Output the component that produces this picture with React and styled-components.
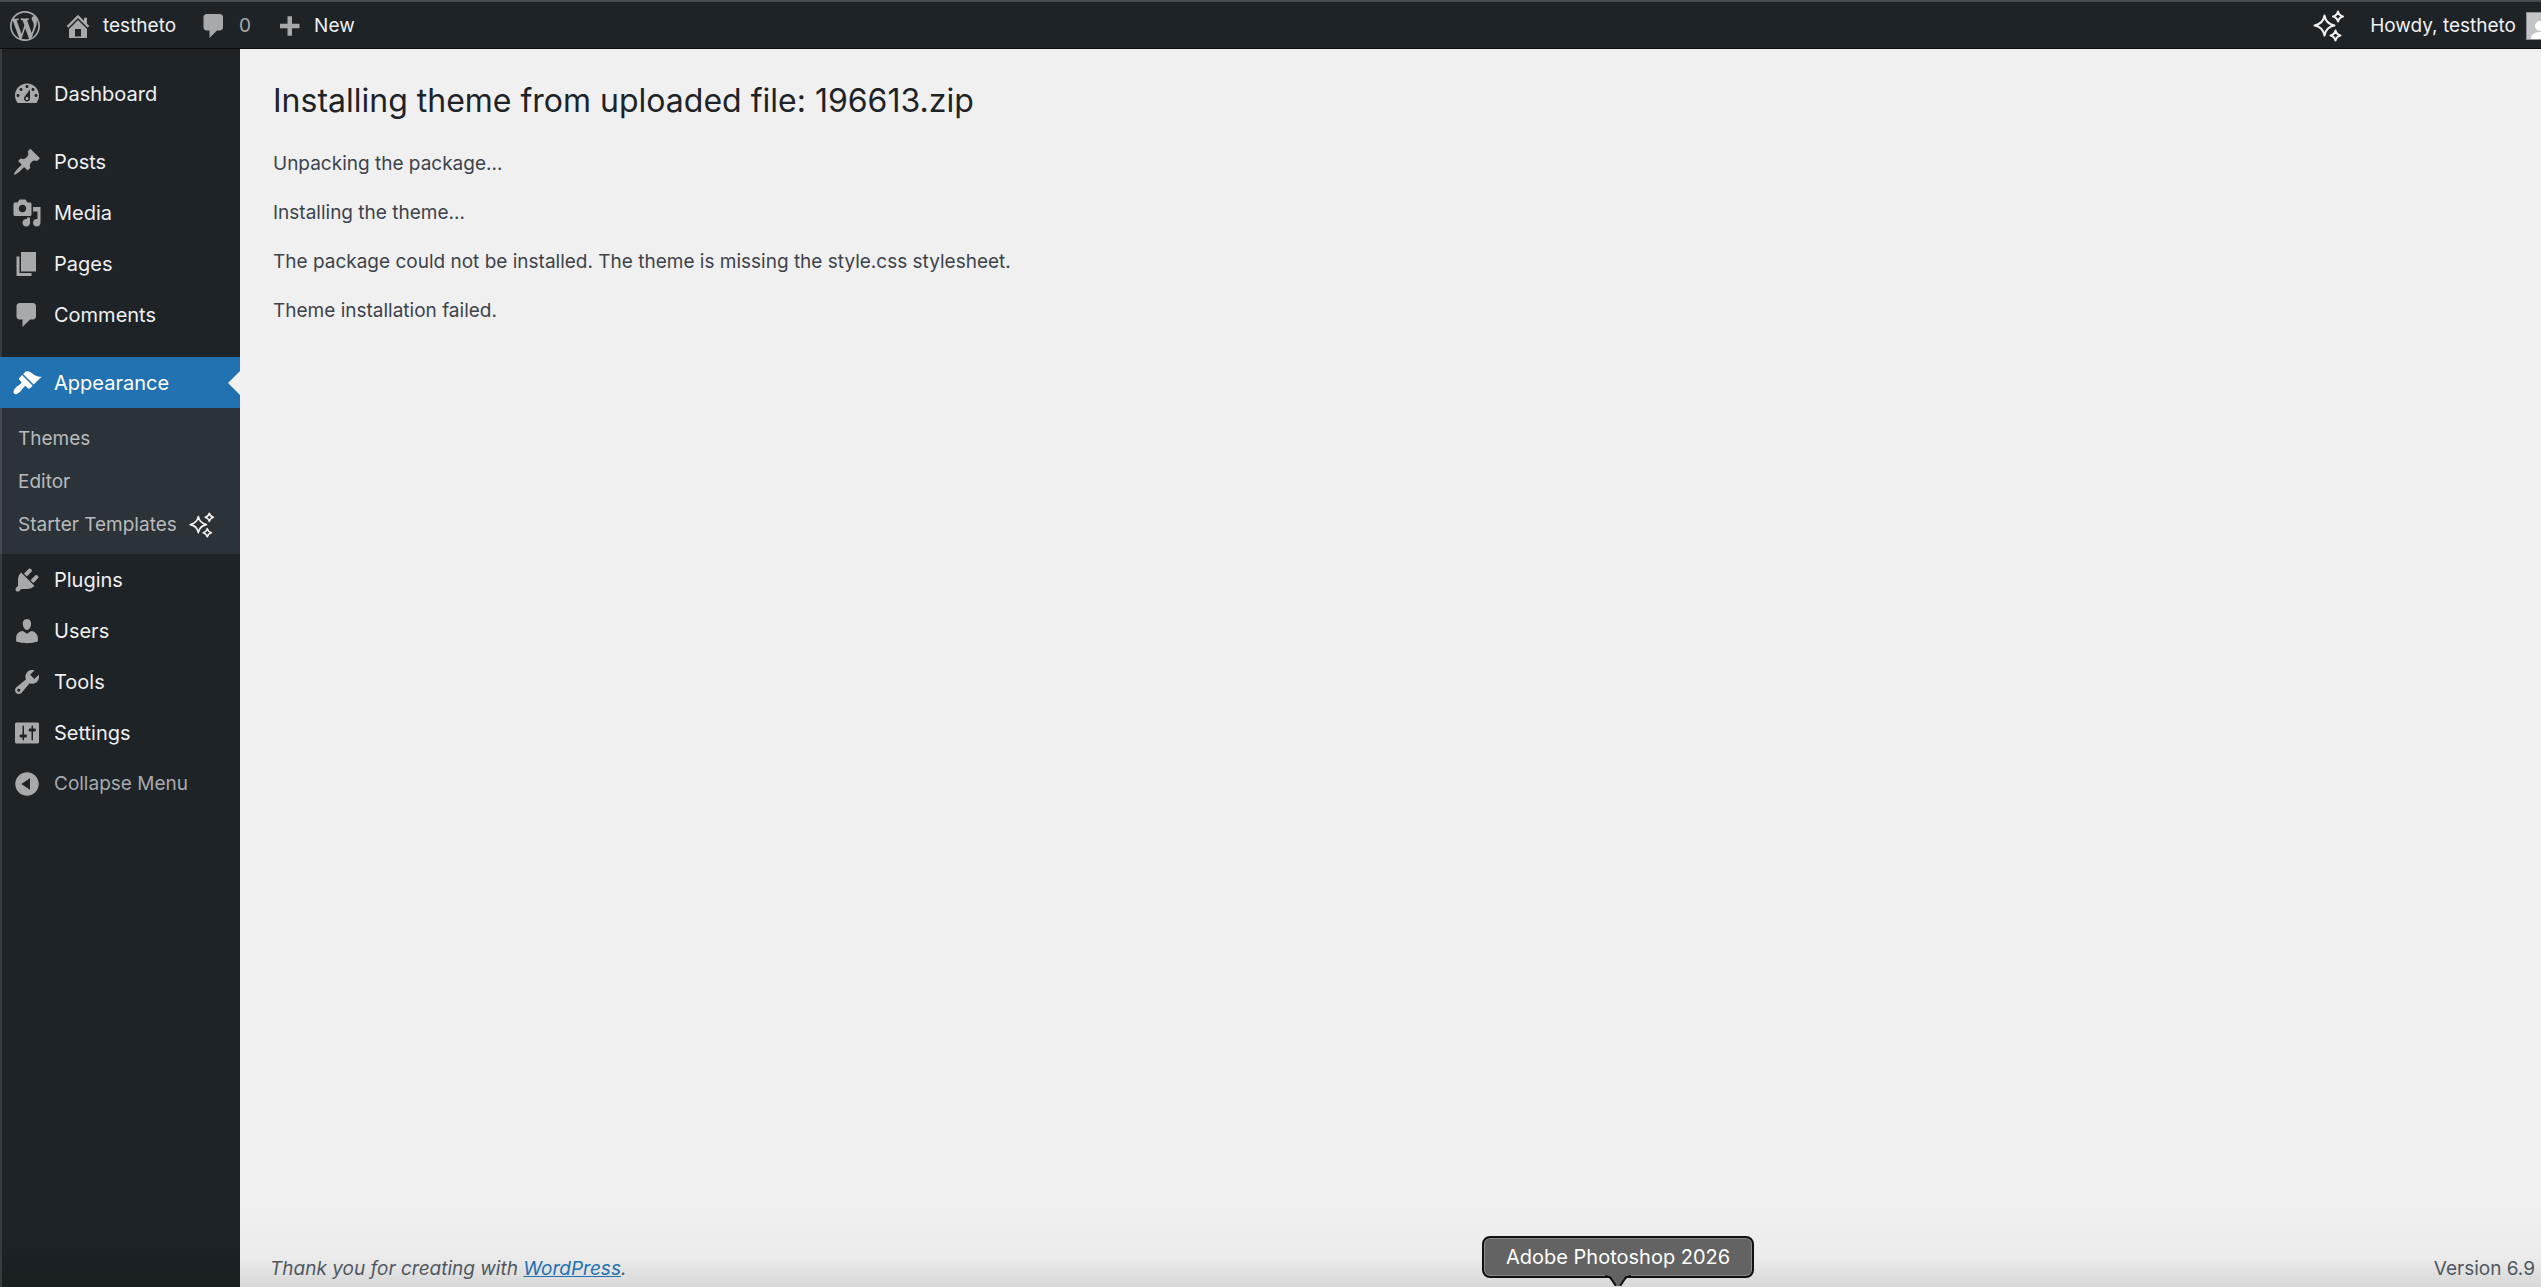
import styled, { createGlobalStyle } from "styled-components"

const icons = {
    wordpress: "M20 10c0-5.51-4.49-10-10-10C4.48 0 0 4.49 0 10c0 5.52 4.48 10 10 10 5.51 0 10-4.48 10-10zM7.78 15.37L4.37 6.22c.55-.02 1.17-.08 1.17-.08.5-.06.44-1.13-.06-1.11 0 0-1.45.11-2.37.11-.18 0-.37 0-.58-.01C4.12 2.69 6.87 1.11 10 1.11c2.33 0 4.45.87 6.05 2.34-.68-.11-1.65.39-1.65 1.58 0 .74.45 1.36.9 2.1.35.61.55 1.36.55 2.46 0 1.49-1.4 5-1.4 5l-3.03-8.37c.54-.02.82-.17.82-.17.5-.05.44-1.25-.06-1.22 0 0-1.44.12-2.38.12-.87 0-2.33-.12-2.33-.12-.5-.03-.56 1.2-.06 1.22l.92.08 1.26 3.41zM17.41 10c.24-.64.74-1.87.43-4.25.7 1.29 1.05 2.71 1.05 4.25 0 3.29-1.73 6.24-4.4 7.78.97-2.59 1.94-5.2 2.92-7.78zM6.1 18.09C3.12 16.65 1.11 13.53 1.11 10c0-1.3.23-2.48.72-3.59C3.25 10.3 4.67 14.2 6.1 18.09zm4.03-6.63l2.58 6.98c-.86.29-1.76.45-2.71.45-.79 0-1.57-.11-2.29-.33.81-2.38 1.62-4.74 2.42-7.1z",
    home: "M16 8.5l1.53 1.53-1.06 1.06L10 4.6l-6.47 6.49-1.06-1.06L10 2.5l4 4v-2h2v4zm-6-2.46l6 5.99V18H4v-5.97zM12 17v-5H8v5h4z",
    plus: "M17 8.5v3h-5v5H9v-5H4v-3h5v-5h3v5h5z",
    dashboard: "M3.76 16h12.48c1.1-1.37 1.76-3.11 1.76-5 0-4.42-3.58-8-8-8s-8 3.58-8 8c0 1.89.66 3.63 1.76 5zM10 4c.55 0 1 .45 1 1s-.45 1-1 1-1-.45-1-1 .45-1 1-1zM6 6c.55 0 1 .45 1 1s-.45 1-1 1-1-.45-1-1 .45-1 1-1zm8 0c.55 0 1 .45 1 1s-.45 1-1 1-1-.45-1-1 .45-1 1-1zm-5.37 5.55L12 7v6c0 1.1-.9 2-2 2s-2-.9-2-2c0-.57.24-1.08.63-1.45zM4 10c.55 0 1 .45 1 1s-.45 1-1 1-1-.45-1-1 .45-1 1-1zm12 0c.55 0 1 .45 1 1s-.45 1-1 1-1-.45-1-1 .45-1 1-1zm-5 3c0-.55-.45-1-1-1s-1 .45-1 1 .45 1 1 1 1-.45 1-1z",
    posts: "M10.44 3.02l1.82-1.82 6.36 6.35-1.83 1.82c-1.05-.68-2.48-.57-3.41.36l-.75.75c-.92.93-1.04 2.35-.35 3.41l-1.83 1.82-2.41-2.41-2.8 2.79c-.42.42-3.38 2.71-3.8 2.29s1.86-3.39 2.28-3.81l2.79-2.79L4.1 9.36l1.83-1.82c1.05.69 2.48.57 3.4-.36l.75-.75c.93-.92 1.05-2.35.36-3.41z",
    media: "M13 11V4c0-.55-.45-1-1-1h-1.67L9 1H5L3.67 3H2c-.55 0-1 .45-1 1v7c0 .55.45 1 1 1h10c.55 0 1-.45 1-1zM7 4.5c1.38 0 2.5 1.12 2.5 2.5S8.38 9.5 7 9.5 4.5 8.38 4.5 7 5.62 4.5 7 4.5zM14 6h5v10.5c0 1.38-1.12 2.5-2.5 2.5S14 17.88 14 16.5s1.12-2.5 2.5-2.5c.17 0 .34.02.5.05V9h-3V6zm-4 8.05V13h2v3.5c0 1.38-1.12 2.5-2.5 2.5S7 17.88 7 16.5 8.12 14 9.5 14c.17 0 .34.02.5.05z",
    pages: "M6 15V2h10v13H6zm-1 1h8v2H3V5h2v11z",
    comments: "M5 2h9c1.1 0 2 .9 2 2v7c0 1.1-.9 2-2 2h-2l-5 5v-5H5c-1.1 0-2-.9-2-2V4c0-1.1.9-2 2-2z",
    appearance: "M14.48 11.06L7.41 3.99l1.5-1.5c.5-.56 2.3-.47 3.51.32 1.21.8 1.43 1.28 2.91 2.1 1.18.64 2.45 1.26 4.45.85zm-.71.71L6.7 4.7 4.93 6.47c-.39.39-.39 1.02 0 1.41l1.06 1.06c.39.39.39 1.03 0 1.42-.6.6-1.43 1.11-2.21 1.69-.35.26-.7.53-1.01.84C1.43 14.23.4 16.08 1.4 17.07c.99 1 2.84-.03 4.18-1.36.31-.31.58-.66.85-1.02.57-.78 1.08-1.61 1.69-2.21.39-.39 1.02-.39 1.41 0l1.06 1.06c.39.39 1.02.39 1.41 0z",
    plugins: "M13.11 4.36L9.87 7.6 8 5.73l3.24-3.24c.35-.34 1.05-.2 1.56.32.52.51.66 1.21.31 1.55zm-8 1.77l.91-1.12 9.01 9.01-1.19.84c-.71.71-2.63 1.16-3.82 1.16H6.14L4.9 17.26c-.59.59-1.54.59-2.12 0-.59-.58-.59-1.53 0-2.12l1.24-1.24v-3.88c0-1.13.4-3.19 1.09-3.89zm7.26 3.97l3.24-3.24c.34-.35 1.04-.21 1.55.31.52.51.66 1.21.31 1.55l-3.24 3.25z",
    users: "M10 9.25c-2.27 0-2.73-3.44-2.73-3.44C7 4.02 7.82 2 9.97 2c2.16 0 2.98 2.02 2.71 3.81 0 0-.41 3.44-2.68 3.44zm0 2.57L12.72 10c2.39 0 4.52 2.33 4.52 4.53v2.49s-3.65 1.13-7.24 1.13c-3.65 0-7.24-1.13-7.24-1.13v-2.49c0-2.25 1.94-4.48 4.47-4.48z",
    tools: "M16.68 9.77c-1.34 1.34-3.3 1.67-4.95.99l-5.41 6.52c-.99.99-2.59.99-3.58 0s-.99-2.59 0-3.57l6.52-5.42c-.68-1.65-.35-3.61.99-4.95 1.28-1.28 3.12-1.62 4.72-1.06l-2.89 2.89 2.82 2.82 2.86-2.87c.53 1.58.18 3.39-1.08 4.65zM3.81 16.21c.4.39 1.04.39 1.43 0 .4-.4.4-1.04 0-1.43-.39-.4-1.03-.4-1.43 0-.39.39-.39 1.03 0 1.43z",
    settings: "M18 16V4c0-.55-.45-1-1-1H3c-.55 0-1 .45-1 1v12c0 .55.45 1 1 1h14c.55 0 1-.45 1-1zM8 11h1c.55 0 1 .45 1 1s-.45 1-1 1H8v1.5c0 .28-.22.5-.5.5s-.5-.22-.5-.5V13H6c-.55 0-1-.45-1-1s.45-1 1-1h1V5.5c0-.28.22-.5.5-.5s.5.22.5.5V11zm5-2h-1c-.55 0-1-.45-1-1s.45-1 1-1h1V5.5c0-.28.22-.5.5-.5s.5.22.5.5V7h1c.55 0 1 .45 1 1s-.45 1-1 1h-1v5.5c0 .28-.22.5-.5.5s-.5-.22-.5-.5V9z",
    collapse: "M10 2.16c4.33 0 7.84 3.51 7.84 7.84s-3.51 7.84-7.84 7.84S2.16 14.33 2.16 10 5.71 2.16 10 2.16zm2 11.72V6.12L6.18 9.97z"
}

const contentMenu = [
    { name: 'Posts', icon: 'posts' },
    { name: 'Media', icon: 'media' },
    { name: 'Pages', icon: 'pages' },
    { name: 'Comments', icon: 'comments' }
]

const siteMenu = [
    { name: 'Plugins', icon: 'plugins' },
    { name: 'Users', icon: 'users' },
    { name: 'Tools', icon: 'tools' },
    { name: 'Settings', icon: 'settings' }
]

const messages = [
    'Unpacking the package…',
    'Installing the theme…',
    'The package could not be installed. The theme is missing the style.css stylesheet.',
    'Theme installation failed.'
]

const Icon = ({ name }) => (
    <Dashicon viewBox="0 0 20 20" aria-hidden="true">
        <path fillRule="evenodd" d={icons[name]} />
    </Dashicon>
)

const Sparkles = ({ size }) => (
    <SparkleSvg viewBox="0 0 32 32" $size={size} aria-hidden="true">
        <path d="M11.5 5.5Q13 14 21.5 15.5Q13 17 11.5 25.5Q10 17 1.5 15.5Q10 14 11.5 5.5Z" />
        <path d="M25 1.5Q26 5.5 30 6.5Q26 7.5 25 11.5Q24 7.5 20 6.5Q24 5.5 25 1.5Z" />
        <path d="M22.5 20.5Q23.5 24.5 27.5 25.5Q23.5 26.5 22.5 30.5Q21.5 26.5 17.5 25.5Q21.5 24.5 22.5 20.5Z" />
    </SparkleSvg>
)

const MenuItem = ({ item }) => (
    <li>
        <MenuLink href="#"><Icon name={item.icon} />{item.name}</MenuLink>
    </li>
)

const App = () => {
    return (
        <Page>
            <GlobalStyle />
            <AdminBar>
                <BarLink href="#" aria-label="About WordPress"><Icon name="wordpress" /></BarLink>
                <BarLink href="#"><Icon name="home" />testheto</BarLink>
                <BarLink href="#" $muted><Icon name="comments" />0</BarLink>
                <BarLink href="#"><Icon name="plus" />New</BarLink>
                <Account>
                    <SparkleLink href="#" aria-label="Assistant"><Sparkles size={32} /></SparkleLink>
                    <BarLink href="#">
                        Howdy, testheto
                        <Avatar>
                            <svg viewBox="0 0 26 26" aria-hidden="true">
                                <circle cx="13" cy="13" r="5" />
                                <path d="M4 26c0-5 4-7 9-7s9 2 9 7z" />
                            </svg>
                        </Avatar>
                    </BarLink>
                </Account>
            </AdminBar>
            <Body>
                <Sidebar>
                    <MenuGroup>
                        <MenuItem item={{ name: 'Dashboard', icon: 'dashboard' }} />
                    </MenuGroup>
                    <MenuGroup>
                        {contentMenu.map(item => <MenuItem key={item.name} item={item} />)}
                    </MenuGroup>
                    <ul>
                        <li>
                            <CurrentLink href="#" aria-current="page"><Icon name="appearance" />Appearance</CurrentLink>
                            <Submenu>
                                <li><a href="#">Themes</a></li>
                                <li><a href="#">Editor</a></li>
                                <li><a href="#">Starter Templates<Sparkles size={26} /></a></li>
                            </Submenu>
                        </li>
                        {siteMenu.map(item => <MenuItem key={item.name} item={item} />)}
                    </ul>
                    <CollapseButton type="button"><Icon name="collapse" />Collapse Menu</CollapseButton>
                </Sidebar>
                <Main>
                    <Content>
                        <h1>Installing theme from uploaded file: 196613.zip</h1>
                        {messages.map(message => <p key={message}>{message}</p>)}
                    </Content>
                    <Footer>
                        <em>Thank you for creating with <a href="#">WordPress</a>.</em>
                        <span>Version 6.9</span>
                    </Footer>
                </Main>
            </Body>
            <DockTip role="tooltip">
                Adobe Photoshop 2026
                <svg viewBox="0 0 30 12" aria-hidden="true">
                    <path className="fill" d="M2 0C8 0 8 4 14 12H16C22 4 22 0 28 0Z" />
                    <path className="edge" d="M2 2C8 2 8 5 13 12M28 2C22 2 22 5 17 12" />
                </svg>
            </DockTip>
        </Page>
    )
}

const GlobalStyle = createGlobalStyle`
    *{
        box-sizing: border-box;
    }

    body{
        margin: 0;
        background: #f0f0f1;
        font-family: Inter, "Liberation Sans", sans-serif;
        font-size: 19px;
        line-height: 24px;
        color: #3c434a;
    }

    a{
        text-decoration: none;
    }

    ul{
        margin: 0;
        padding: 0;
        list-style: none;
    }
`

const Page = styled.div`
    position: relative;
    display: flex;
    flex-direction: column;
    min-height: 100vh;
    overflow: hidden;
`

const Dashicon = styled.svg`
    width: 30px;
    height: 30px;
    flex: none;
    fill: #a7aaad;
`

const SparkleSvg = styled.svg`
    width: ${props => props.$size}px;
    height: ${props => props.$size}px;
    flex: none;
    fill: none;
    stroke: #f0f0f1;
    stroke-width: 2;
    stroke-linejoin: round;
`

const AdminBar = styled.header`
    display: flex;
    align-items: center;
    gap: 23px;
    height: 49px;
    padding: 2px 0 0 10px;
    background: #1d2327;
    border-top: 2px solid #464b4f;
    border-bottom: 1px solid #0b0d0f;
`

const BarLink = styled.a`
    display: flex;
    align-items: center;
    gap: 10px;
    white-space: nowrap;
    color: ${props => props.$muted ? '#a7aaad' : '#f0f0f1'};
`

const Account = styled.div`
    display: flex;
    align-items: center;
    gap: 25px;
    margin-left: auto;
    /* the avatar runs past the edge of the window */
    margin-right: -13px;
`

const SparkleLink = styled.a`
    display: flex;
`

const Avatar = styled.span`
    width: 28px;
    height: 28px;
    border: 1px solid #8c8f94;
    background: #c3c4c7;

    svg{
        display: block;
        width: 26px;
        height: 26px;
        fill: #fff;
    }
`

const Body = styled.div`
    display: flex;
    flex: 1;
`

const Sidebar = styled.nav`
    width: 240px;
    flex: none;
    padding-top: 19px;
    background: linear-gradient(transparent calc(100% - 50px), rgba(0, 0, 0, 0.15)), #1d2327;
    box-shadow: inset 2px 0 #363b3f;
`

const MenuGroup = styled.ul`
    margin-bottom: 17px;
`

const MenuLink = styled.a`
    display: flex;
    align-items: center;
    gap: 12px;
    height: 51px;
    padding-left: 12px;
    font-size: 20px;
    color: #f0f0f1;
`

const CurrentLink = styled(MenuLink)`
    position: relative;
    background: #2271b1;
    color: #fff;

    svg{
        fill: #fff;
    }

    &::after{
        content: "";
        position: absolute;
        right: 0;
        top: 50%;
        border: 12px solid transparent;
        border-right-color: #f0f0f1;
        border-left: 0;
        transform: translateY(-50%);
    }
`

const Submenu = styled.ul`
    padding: 9px 0 8px;
    background: #2c3338;
    box-shadow: inset 2px 0 #43494e;

    a{
        display: flex;
        align-items: center;
        gap: 12px;
        height: 43px;
        padding-left: 18px;
        color: #b8babd;
    }
`

const CollapseButton = styled.button`
    display: flex;
    align-items: center;
    gap: 12px;
    height: 51px;
    padding: 0 0 0 12px;
    border: 0;
    background: none;
    font: inherit;
    color: #a7aaad;
    cursor: pointer;
`

const Main = styled.main`
    display: flex;
    flex: 1;
    flex-direction: column;
    justify-content: space-between;
    background: linear-gradient(transparent calc(100% - 80px), rgba(0, 0, 0, 0.02) calc(100% - 30px), rgba(0, 0, 0, 0.1));
`

const Content = styled.div`
    padding: 28px 33px;

    h1{
        margin: 0 0 28px;
        font-size: 32px;
        font-weight: 400;
        line-height: 47px;
        color: #1d2327;
    }

    p{
        margin: 0 0 25px;
    }
`

const Footer = styled.footer`
    display: flex;
    justify-content: space-between;
    padding: 0 6px 6px 30px;
    color: #50575e;

    a{
        color: #2271b1;
        text-decoration: underline;
    }
`

const DockTip = styled.div`
    position: absolute;
    left: 1482px;
    bottom: 9px;
    display: grid;
    place-items: center;
    height: 42px;
    padding: 0 22px;
    border: 2px solid #111;
    border-radius: 8px;
    background: #636363;
    box-shadow: inset 0 0 0 1px #8a8a8a;
    font-size: 20px;
    color: #fff;

    svg{
        position: absolute;
        top: 36px;
        left: 50%;
        width: 30px;
        height: 12px;
        transform: translateX(-50%);
    }

    .fill{
        fill: #636363;
    }

    .edge{
        fill: none;
        stroke: #111;
        stroke-width: 2;
    }
`

export default App
